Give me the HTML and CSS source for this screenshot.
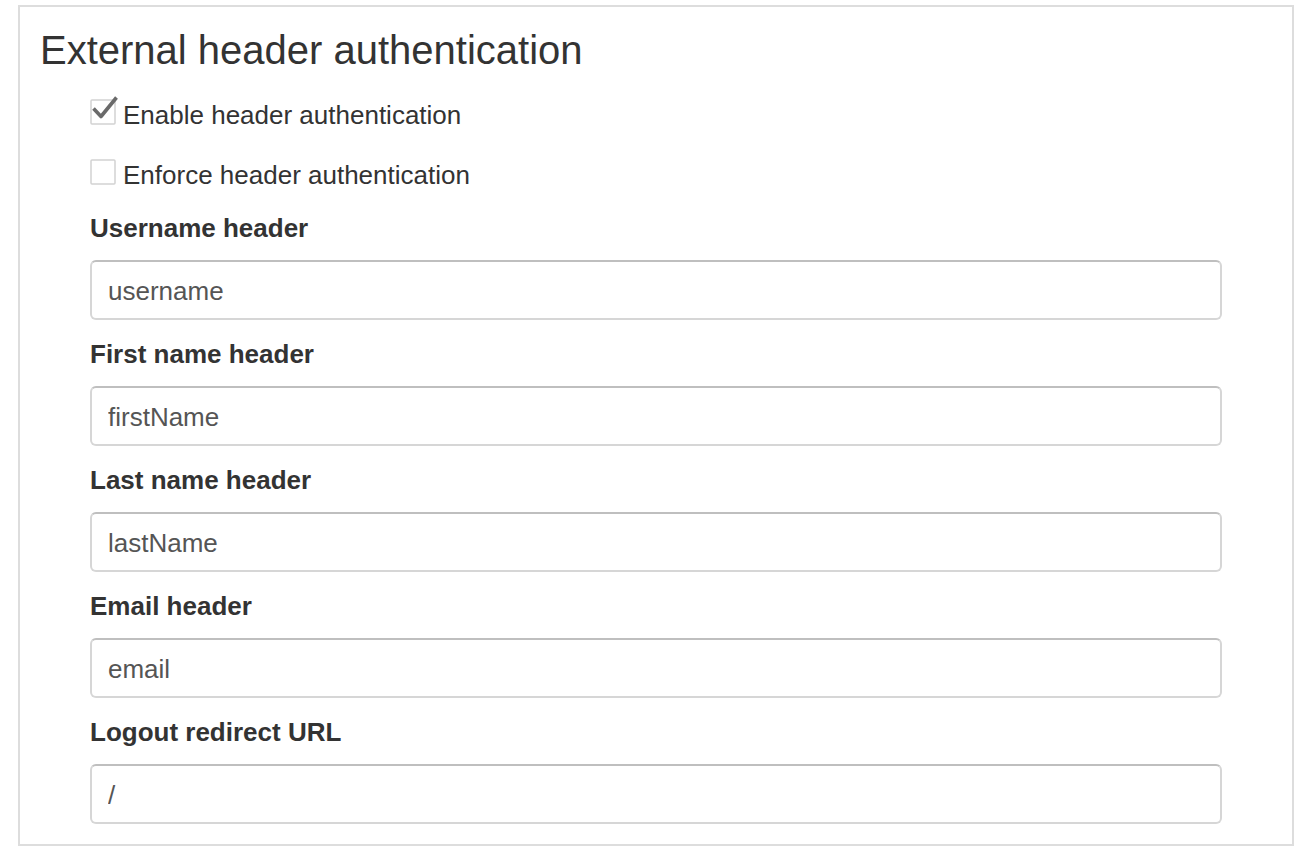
FILE: index.html
```html
<!DOCTYPE html>
<html lang="en">
<head>
    <meta charset="UTF-8">
    <meta name="viewport" content="width=device-width, initial-scale=1.0">
    <title>External header authentication</title>
    <link rel="stylesheet" href="styles.css">
</head>
<body>
    <div class="panel">
        <h2>External header authentication</h2>
        <div class="fields">
            <div class="check-row">
                <svg class="checkbox" width="26" height="26" viewBox="0 0 26 26">
                    <rect x="1" y="1" width="24" height="24" rx="1" fill="#fff" stroke="#d2d2d2" stroke-width="1.5"/>
                    <path d="M3.5 9.5 L11 17.5 L26.5 -1.5" fill="none" stroke="#6a6a6a" stroke-width="3.6" stroke-linejoin="round"/>
                </svg>
                <span>Enable header authentication</span>
            </div>
            <div class="check-row last">
                <svg class="checkbox" width="26" height="26" viewBox="0 0 26 26">
                    <rect x="1" y="1" width="24" height="24" rx="1" fill="#fff" stroke="#d2d2d2" stroke-width="1.5"/>
                </svg>
                <span>Enforce header authentication</span>
            </div>

            <div class="group">
                <label for="usernameHeader">Username header</label>
                <input id="usernameHeader" type="text" value="username">
            </div>
            <div class="group">
                <label for="firstNameHeader">First name header</label>
                <input id="firstNameHeader" type="text" value="firstName">
            </div>
            <div class="group">
                <label for="lastNameHeader">Last name header</label>
                <input id="lastNameHeader" type="text" value="lastName">
            </div>
            <div class="group">
                <label for="emailHeader">Email header</label>
                <input id="emailHeader" type="text" value="email">
            </div>
            <div class="group">
                <label for="logoutUrl">Logout redirect URL</label>
                <input id="logoutUrl" type="text" value="/">
            </div>
        </div>
    </div>
</body>
</html>
```

FILE: styles.css
```css
body {
    margin: 0;
    font-family: 'Liberation Sans', Arial, sans-serif;
    font-size: 26px;
    color: #333;
    background-color: white;
}
.panel {
    margin: 5px 6px 0 18px;
    border: 2px solid #ddd;
    padding: 0 20px 20px;
}
h2 {
    margin: 21px 0 0;
    font-size: 40px;
    line-height: 44px;
    font-weight: normal;
    color: #333;
}
.fields {
    margin-top: 27px;
    padding: 0 50px;
}
.check-row {
    display: flex;
    align-items: flex-start;
    height: 30px;
    line-height: 30px;
    margin-bottom: 30px;
}
.check-row span {
    padding-top: 1px;
}
.check-row.last {
    margin-bottom: 24px;
}
.checkbox {
    flex-shrink: 0;
    overflow: visible;
    margin-right: 7px;
}
.group {
    margin-bottom: 19px;
}
.group:last-child {
    margin-bottom: 0;
}
.group label {
    display: block;
    font-weight: bold;
    line-height: 30px;
    margin-bottom: 17px;
}
.group input {
    display: block;
    width: 100%;
    height: 60px;
    box-sizing: border-box;
    margin: 0;
    padding: 2px 16px 0;
    border: 2px solid #d6d6d6;
    border-top-color: #bfbfbf;
    border-radius: 6px;
    font-family: 'Liberation Sans', Arial, sans-serif;
    font-size: 26px;
    color: #555;
    background-color: white;
}
```
